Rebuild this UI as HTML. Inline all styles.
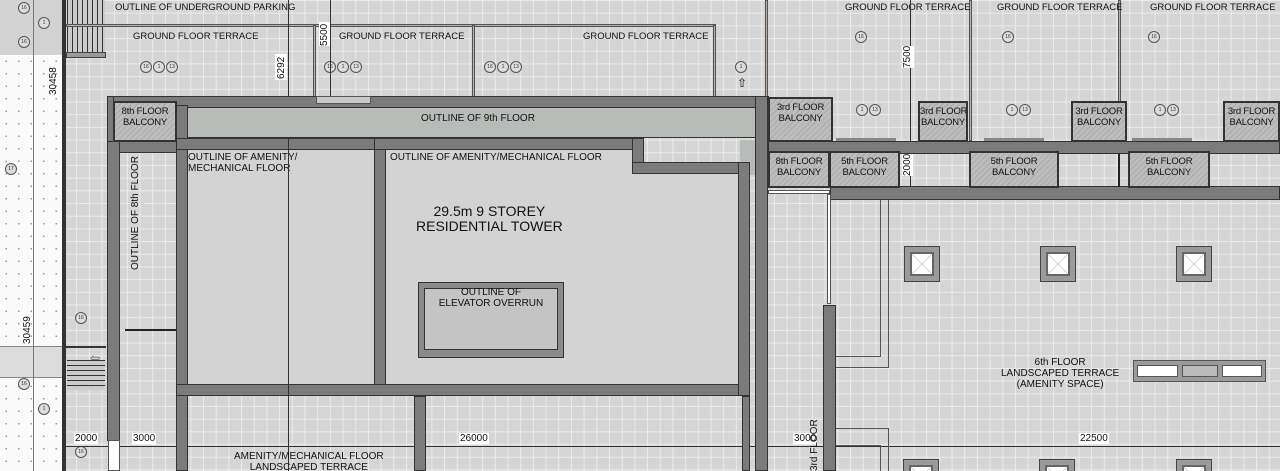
<!DOCTYPE html>
<html><head><meta charset="utf-8"><style>
*{margin:0;padding:0;box-sizing:border-box}
html,body{width:1280px;height:471px;overflow:hidden}
body{position:relative;font-family:"Liberation Sans",Arial,sans-serif;background:#d5d5d5}
.grid{position:absolute;background-color:#d5d5d5;background-image:linear-gradient(#ebebeb 1px,transparent 1px),linear-gradient(90deg,#ebebeb 1px,transparent 1px);background-size:12.7px 12.7px}
.a{position:absolute}
.w{position:absolute;background:#7b7b7b;border:1px solid #333}
.fl{position:absolute;background:#d3d3d3}
.hat{position:absolute;background:repeating-linear-gradient(135deg,#aaa 0 1px,#bdbdbd 1px 4px);border:2px solid #333;font-size:9.5px;text-align:center;line-height:11px;color:#111;padding-top:3px;white-space:nowrap;overflow:hidden;letter-spacing:-0.2px}
.t{position:absolute;font-size:10px;color:#111;white-space:nowrap;line-height:11px}
.c{position:absolute;width:12px;height:12px;border:1px solid #555;border-radius:50%;font-size:5px;text-align:center;line-height:10px;color:#333;background:#ddd}
.ln{position:absolute;background:#222}
.dim{position:absolute;background:#fff;font-size:10px;line-height:11px;color:#111}
.vt{position:absolute;font-size:10px;color:#111;white-space:nowrap;transform:rotate(-90deg);transform-origin:left top}
.sky{position:absolute;width:36px;height:36px;background:#9a9a9a;border:1px solid #444;overflow:hidden}
.sky i{position:absolute;left:5px;top:5px;width:24px;height:24px;background:#fff;border:2px solid #666;background-image:linear-gradient(45deg,transparent 48%,#bbb 50%,transparent 52%),linear-gradient(-45deg,transparent 48%,#bbb 50%,transparent 52%)}
</style></head><body>
<div class="grid" style="left:0;top:0;width:1280px;height:471px"></div>
<div class="a" style="left:0;top:55px;width:62px;height:416px;background:#fafafa;background-image:radial-gradient(#999 0.7px,transparent 1px);background-size:12.5px 12.5px"></div>
<div class="a" style="left:0;top:0;width:62px;height:55px;background:#d2d2d2"></div>
<div class="a" style="left:0;top:346px;width:62px;height:32px;background:#dcdcdc;border-top:1px solid #888;border-bottom:1px solid #888"></div>
<div class="ln" style="left:33px;top:0;width:1px;height:471px;background:#777"></div>
<div class="a" style="left:62px;top:0;width:4px;height:471px;background:#333"></div>
<div class="a" style="left:67px;top:0;width:38px;height:56px;background:repeating-linear-gradient(90deg,#333 0 1px,#ccc 1px 5px)"></div>
<div class="a" style="left:66px;top:52px;width:40px;height:6px;background:#999;border:1px solid #444"></div>
<div class="ln" style="left:66px;top:24px;width:650px;height:3px;background:#b8b0a8;border:1px solid #555"></div>
<div class="ln" style="left:313px;top:25px;width:3px;height:72px;background:#b8b0a8;border:1px solid #555"></div>
<div class="ln" style="left:472px;top:25px;width:3px;height:72px;background:#b8b0a8;border:1px solid #555"></div>
<div class="ln" style="left:713px;top:25px;width:3px;height:72px;background:#b8b0a8;border:1px solid #555"></div>
<div class="ln" style="left:765px;top:0;width:3px;height:97px;background:#b8b0a8;border:1px solid #555"></div>
<div class="ln" style="left:969px;top:0;width:3px;height:141px;background:#b8b0a8;border:1px solid #555"></div>
<div class="ln" style="left:1118px;top:0;width:3px;height:141px;background:#b8b0a8;border:1px solid #555"></div>
<div class="t" style="left:115px;top:2px;font-size:9.5px">OUTLINE OF UNDERGROUND PARKING</div>
<div class="t" style="left:133px;top:31px;font-size:9.5px">GROUND FLOOR TERRACE</div>
<div class="t" style="left:339px;top:31px;font-size:9.5px">GROUND FLOOR TERRACE</div>
<div class="t" style="left:583px;top:31px;font-size:9.5px">GROUND FLOOR TERRACE</div>
<div class="t" style="left:845px;top:2px;font-size:9.5px">GROUND FLOOR TERRACE</div>
<div class="t" style="left:997px;top:2px;font-size:9.5px">GROUND FLOOR TERRACE</div>
<div class="t" style="left:1150px;top:2px;font-size:9.5px">GROUND FLOOR TERRACE</div>
<div class="c" style="left:18px;top:2px">16</div><div class="c" style="left:38px;top:17px">1</div><div class="c" style="left:18px;top:36px">16</div>
<div class="c" style="left:140px;top:61px">16</div><div class="c" style="left:153px;top:61px">1</div><div class="c" style="left:166px;top:61px">13</div>
<div class="c" style="left:324px;top:61px">16</div><div class="c" style="left:337px;top:61px">1</div><div class="c" style="left:350px;top:61px">13</div>
<div class="c" style="left:484px;top:61px">16</div><div class="c" style="left:497px;top:61px">1</div><div class="c" style="left:510px;top:61px">13</div>
<div class="c" style="left:735px;top:61px">1</div><div class="t" style="left:737px;top:78px;font-size:12px">&#8679;</div>
<div class="c" style="left:855px;top:31px">16</div><div class="c" style="left:1002px;top:31px">16</div><div class="c" style="left:1148px;top:31px">16</div>
<div class="c" style="left:856px;top:104px">1</div><div class="c" style="left:869px;top:104px">13</div>
<div class="c" style="left:1006px;top:104px">1</div><div class="c" style="left:1019px;top:104px">13</div>
<div class="c" style="left:1154px;top:104px">1</div><div class="c" style="left:1167px;top:104px">13</div>
<div class="c" style="left:5px;top:163px">17</div><div class="c" style="left:75px;top:312px">16</div><div class="c" style="left:18px;top:378px">16</div><div class="c" style="left:38px;top:403px">1</div><div class="c" style="left:75px;top:446px">16</div>
<div class="ln" style="left:288px;top:0;width:1px;height:471px;background:#333"></div>
<div class="dim" style="left:275px;top:54px;width:12px;height:26px"></div><div class="vt" style="left:276px;top:79px">6292</div>
<div class="ln" style="left:330px;top:0;width:1px;height:97px;background:#333"></div>
<div class="dim" style="left:319px;top:22px;width:11px;height:24px"></div><div class="vt" style="left:319px;top:46px">5500</div>
<div class="ln" style="left:910px;top:0;width:1px;height:200px;background:#333"></div>
<div class="dim" style="left:902px;top:46px;width:12px;height:22px"></div><div class="vt" style="left:902px;top:68px">7500</div>
<div class="vt" style="left:48px;top:95px">30458</div>
<div class="vt" style="left:22px;top:344px">30459</div>
<div class="dim" style="left:275px;top:250px;width:12px;height:30px"></div><div class="vt" style="left:276px;top:281px">11313</div>
<div class="ln" style="left:62px;top:446px;width:1218px;height:1px;background:#333"></div>
<div class="dim" style="left:74px;top:433px;padding:0 1px">2000</div>
<div class="dim" style="left:132px;top:433px;padding:0 1px">3000</div>
<div class="dim" style="left:459px;top:433px;padding:0 1px">26000</div>
<div class="dim" style="left:793px;top:433px;padding:0 1px">3000</div>
<div class="dim" style="left:1079px;top:433px;padding:0 1px">22500</div>
<div class="a" style="left:67px;top:360px;width:38px;height:30px;background:repeating-linear-gradient(180deg,#333 0 1px,#ccc 1px 5px)"></div>
<div class="t" style="left:90px;top:353px;font-size:12px;color:#555">&#8678;</div>
<div class="a" style="left:66px;top:346px;width:40px;height:2px;background:#333"></div>
<div class="ln" style="left:125px;top:329px;width:52px;height:2px"></div>
<div class="w" style="left:107px;top:96px;width:662px;height:12px"></div>
<div class="a" style="left:316px;top:96px;width:55px;height:8px;background:#c9c9c9;border:1px solid #555"></div>
<div class="w" style="left:107px;top:96px;width:7px;height:48px"></div>
<div class="hat" style="left:113px;top:101px;width:64px;height:41px">8th FLOOR<br>BALCONY</div>
<div class="w" style="left:107px;top:141px;width:70px;height:12px"></div>
<div class="w" style="left:107px;top:141px;width:13px;height:300px"></div>
<div class="a" style="left:108px;top:440px;width:12px;height:31px;background:#fff;border:1px solid #555"></div>
<div class="w" style="left:176px;top:105px;width:12px;height:366px"></div>
<div class="a" style="left:188px;top:108px;width:569px;height:30px;background:#b7bcb9;border-bottom:1px solid #333"></div>
<div class="t" style="left:421px;top:113px">OUTLINE OF 9th FLOOR</div>
<div class="w" style="left:755px;top:96px;width:13px;height:375px"></div>
<div class="a" style="left:740px;top:140px;width:15px;height:35px;background:#b7bcb9"></div>
<div class="w" style="left:176px;top:138px;width:210px;height:12px"></div>
<div class="fl" style="left:188px;top:150px;width:186px;height:234px"></div>
<div class="w" style="left:374px;top:138px;width:12px;height:258px"></div>
<div class="w" style="left:176px;top:384px;width:574px;height:12px"></div>
<div class="w" style="left:374px;top:138px;width:270px;height:12px"></div>
<div class="w" style="left:632px;top:138px;width:12px;height:36px"></div>
<div class="w" style="left:632px;top:162px;width:118px;height:12px"></div>
<div class="w" style="left:738px;top:162px;width:12px;height:234px"></div>
<div class="fl" style="left:386px;top:150px;width:246px;height:234px"></div>
<div class="fl" style="left:632px;top:174px;width:106px;height:210px"></div>
<div class="t" style="left:188px;top:152px">OUTLINE OF AMENITY/<br>MECHANICAL FLOOR</div>
<div class="t" style="left:390px;top:152px">OUTLINE OF AMENITY/MECHANICAL FLOOR</div>
<div class="t" style="left:416px;top:204px;font-size:14px;line-height:15px;text-align:center">29.5m 9 STOREY<br>RESIDENTIAL TOWER</div>
<div class="a" style="left:418px;top:282px;width:146px;height:76px;background:#8a8a8a;border:1px solid #333"></div>
<div class="a" style="left:424px;top:288px;width:134px;height:62px;background:#c4c4c4;border:1px solid #333"></div>
<div class="t" style="left:424px;top:287px;width:134px;text-align:center">OUTLINE OF<br>ELEVATOR OVERRUN</div>
<div class="ln" style="left:288px;top:138px;width:1px;height:333px;background:#333"></div>
<div class="vt" style="left:130px;top:270px">OUTLINE OF 8th FLOOR</div>
<div class="w" style="left:414px;top:396px;width:12px;height:75px"></div>
<div class="w" style="left:742px;top:396px;width:8px;height:75px"></div>
<div class="t" style="left:234px;top:451px;text-align:center">AMENITY/MECHANICAL FLOOR<br>LANDSCAPED TERRACE</div>
<div class="w" style="left:768px;top:141px;width:512px;height:13px"></div>
<div class="w" style="left:830px;top:186px;width:450px;height:14px"></div>
<div class="hat" style="left:768px;top:97px;width:65px;height:45px">3rd FLOOR<br>BALCONY</div>
<div class="hat" style="left:918px;top:101px;width:50px;height:41px">3rd FLOOR<br>BALCONY</div>
<div class="hat" style="left:1071px;top:101px;width:56px;height:41px">3rd FLOOR<br>BALCONY</div>
<div class="hat" style="left:1223px;top:101px;width:57px;height:41px">3rd FLOOR<br>BALCONY</div>
<div class="a" style="left:836px;top:138px;width:60px;height:3px;background:#888"></div>
<div class="a" style="left:984px;top:138px;width:60px;height:3px;background:#888"></div>
<div class="a" style="left:1132px;top:138px;width:60px;height:3px;background:#888"></div>
<div class="hat" style="left:768px;top:151px;width:62px;height:37px">8th FLOOR<br>BALCONY</div>
<div class="hat" style="left:829px;top:151px;width:71px;height:37px">5th FLOOR<br>BALCONY</div>
<div class="hat" style="left:969px;top:151px;width:90px;height:37px">5th FLOOR<br>BALCONY</div>
<div class="hat" style="left:1128px;top:151px;width:82px;height:37px">5th FLOOR<br>BALCONY</div>
<div class="ln" style="left:1118px;top:154px;width:2px;height:33px"></div>
<div class="dim" style="left:902px;top:154px;width:11px;height:22px"></div><div class="vt" style="left:902px;top:176px">2000</div>
<div class="a" style="left:768px;top:190px;width:62px;height:4px;background:#fff;border:1px solid #555"></div>
<div class="a" style="left:827px;top:194px;width:4px;height:110px;background:#fff;border:1px solid #555"></div>
<div class="w" style="left:823px;top:305px;width:13px;height:166px"></div>
<div class="a" style="left:836px;top:200px;width:45px;height:157px;border:1px solid #555;border-left:0;border-top:0"></div>
<div class="a" style="left:836px;top:200px;width:53px;height:168px;border:1px solid #555;border-left:0;border-top:0"></div>
<div class="a" style="left:836px;top:428px;width:53px;height:43px;border:1px solid #555;border-left:0;border-bottom:0"></div>
<div class="a" style="left:836px;top:445px;width:45px;height:26px;border:1px solid #555;border-left:0;border-bottom:0"></div>
<div class="sky" style="left:904px;top:246px"><i></i></div>
<div class="sky" style="left:1040px;top:246px"><i></i></div>
<div class="sky" style="left:1176px;top:246px"><i></i></div>
<div class="sky" style="left:903px;top:459px;height:12px;border-bottom:0"><i></i></div>
<div class="sky" style="left:1039px;top:459px;height:12px;border-bottom:0"><i></i></div>
<div class="sky" style="left:1176px;top:459px;height:12px;border-bottom:0"><i></i></div>
<div class="t" style="left:1001px;top:357px;text-align:center">6th FLOOR<br>LANDSCAPED TERRACE<br>(AMENITY SPACE)</div>
<div class="a" style="left:1133px;top:360px;width:133px;height:22px;background:#9a9a9a;border:1px solid #555"></div>
<div class="a" style="left:1137px;top:365px;width:41px;height:12px;background:#fff;border:1px solid #555"></div>
<div class="a" style="left:1182px;top:365px;width:36px;height:12px;background:#bbb;border:1px solid #555"></div>
<div class="a" style="left:1222px;top:365px;width:40px;height:12px;background:#fff;border:1px solid #555"></div>
<div class="vt" style="left:809px;top:471px">3rd FLOOR</div>
</body></html>
